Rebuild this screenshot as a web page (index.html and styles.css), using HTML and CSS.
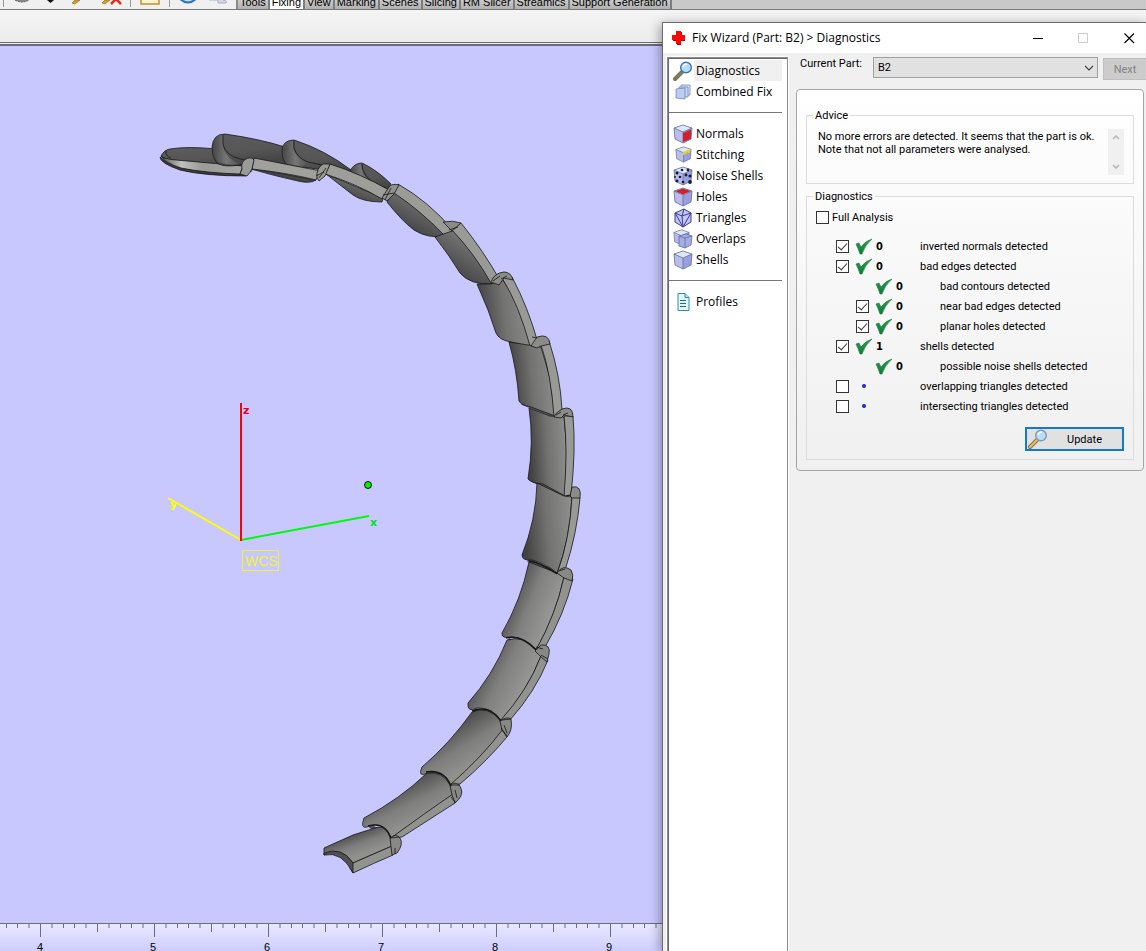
FILE: index.html
```html
<!DOCTYPE html>
<html lang="en">
<head>
<meta charset="utf-8">
<title>Fix Wizard</title>
<link rel="stylesheet" href="styles.css">
</head>
<body>
<div class="app">
  <header class="toolbar">
    <div class="tools">
      <svg class="tools-art" viewBox="0 0 236 9" width="236" height="9" aria-hidden="true">
        <path d="M3.500 0V7M130.500 0V7M169.500 0V7" stroke="#9a9a9a"/>
        <path d="M15 0q7 4 14 0" fill="#888" stroke="#555" stroke-dasharray="2 1"/>
        <path d="M47 0h7l-3.500 3z" fill="#111"/>
        <path d="M72 3l3-3h5l-5 4z" fill="#d79b2c" stroke="#8f6a20" stroke-width=".6"/>
        <path d="M102 3l3-3h5l-5 4z" fill="#d79b2c" stroke="#8f6a20" stroke-width=".6"/>
        <path d="M111 4l5-5M121 4l-5-5" stroke="#d8301c" stroke-width="2.500"/>
        <path d="M141 -2h18v6h-18z" fill="#fff3cf" stroke="#bd922c" stroke-width="1.500"/>
        <path d="M179 -2q9 9 18 0z" fill="#c7e2fa" stroke="#2470cc" stroke-width="2"/>
        <path d="M209 0h9v3h8q2-2-3-3" fill="#d5d8e8" stroke="#aab0c8"/>
      </svg>
    </div>
    <nav class="tabs">
      <button class="tab">Tools</button><button class="tab tab-on">Fixing</button><button class="tab">View</button><button class="tab">Marking</button><button class="tab">Scenes</button><button class="tab">Slicing</button><button class="tab">RM Slicer</button><button class="tab">Streamics</button><button class="tab">Support Generation</button>
    </nav>
  </header>
  <div class="ribbon"></div>
  <main class="viewport">
    <svg class="scene" viewBox="0 46 662 877" role="img" aria-label="Curved segmented part with coordinate axes">
      <defs>
        <linearGradient id="back" x1="0" y1="0" x2=".3" y2="1"><stop offset="0" stop-color="#5c5c5c"/><stop offset=".6" stop-color="#565656"/><stop offset="1" stop-color="#444"/></linearGradient>
        <linearGradient id="lobe" x1="0" y1="0" x2="1" y2="0"><stop offset="0" stop-color="#484848"/><stop offset=".5" stop-color="#777"/><stop offset="1" stop-color="#505050"/></linearGradient>
        <linearGradient id="tip" x1="0" y1="0" x2="1" y2="0"><stop offset="0" stop-color="#555"/><stop offset=".25" stop-color="#c0c0bc"/><stop offset=".5" stop-color="#9b9b99"/><stop offset="1" stop-color="#a4a4a0"/></linearGradient>
        <linearGradient id="up" x1=".2" y1=".9" x2=".65" y2=".25"><stop offset="0" stop-color="#3c3c3c"/><stop offset="1" stop-color="#747474"/></linearGradient>
        <linearGradient id="mid" x1="0" y1=".55" x2="1" y2=".4"><stop offset=".05" stop-color="#424242"/><stop offset=".5" stop-color="#727271"/><stop offset="1" stop-color="#8e8e8c"/></linearGradient>
        <linearGradient id="low" x1=".15" y1=".3" x2=".75" y2=".65"><stop offset="0" stop-color="#4a4a4a"/><stop offset=".5" stop-color="#80807f"/><stop offset="1" stop-color="#969694"/></linearGradient>
        <linearGradient id="end" x1=".3" y1=".25" x2=".62" y2=".72"><stop offset="0" stop-color="#4c4c4c"/><stop offset=".55" stop-color="#7e7e7d"/><stop offset="1" stop-color="#90908d"/></linearGradient>
      </defs>
      <path fill="#777774" d="M240 162L256 158L252 172L241 173Z"/>
      <path d="M511 341L532 347M522 403L553 415M532 480L565 495M528 560L557 573M508 640L536 650M474 711L500 721M428 772L450 785M370 826L391 838" stroke="#555" stroke-width="4" fill="none"/>
      <g stroke="#171717" stroke-width=".8" stroke-linejoin="round">
        <path fill="url(#back)" d="M161 156Q164 150 170 149Q188 146 216 149L246 161L243 169Q200 168 166 160Z"/>
        <path fill="#3c3c3c" d="M160 157L166 162Q203 172 242 171L246 176Q205 176 180 170Q160 163 160 157Z"/>
        <path fill="url(#tip)" d="M161 156Q164 159 176 160L243 166L240 174Q205 173 181 168Q165 163 161 156Z"/>
        <path fill="none" d="M166 151Q165 156 171 158"/>
        <path fill="url(#back)" d="M212 147Q213 134 225 134Q260 139 285 147L288 166L250 163Q219 170 215 160Q212 155 212 147Z"/>
        <path fill="url(#lobe)" stroke="none" d="M213 148Q213 135 223 135V146Q225 158 240 164Q228 166 219 162Q213 157 213 148Z"/>
        <path fill="none" d="M223 135V144Q225 155 240 159L247 160"/>
        <path fill="url(#back)" d="M282 150Q283 140 294 140Q325 150 351 170L354 177L325 170L287 165Q282 160 282 150Z"/>
        <path fill="url(#lobe)" stroke="none" d="M283 151Q284 141 293 141V149Q296 158 308 163L302 167L288 164Q283 159 283 151Z"/>
        <path fill="none" d="M294 141V148Q297 158 308 162L322 165"/>
        <path fill="url(#back)" d="M350 171Q354 163 362 163Q377 170 391 184L385 192L360 179Z"/>
        <path fill="url(#lobe)" stroke="none" d="M351 171Q355 164 361 164Q361 175 371 181L357 176Z"/>
        <path fill="none" d="M362 164Q362 176 376 184L386 188"/>
        <path fill="#454545" d="M251 168L316 180Q310 184 298 181Q275 176 251 169Z"/>
        <path fill="#a0a09c" d="M254 158L321 171L316 180Q288 173 252 169Z"/>
        <path fill="#9a9a97" d="M242 169Q240 161 248 158Q253 157 254 160L252 169Q250 173 247 176L240 174Z"/>
        <path fill="url(#up)" d="M326 174L383 198L382 202Q363 202 353 195Z"/>
        <path fill="#9d9d99" d="M330 164Q361 174 389 190L382 199Q357 184 325 174Z"/>
        <path fill="#999995" d="M317 178Q316 168 323 164L330 164L325 176L319 181Z"/>
        <path fill="url(#up)" d="M387 202Q402 221 414 230Q428 239 446 236L441 224L395 190Z"/>
        <path fill="#9b9b97" d="M398 184Q428 201 453 230L446 237Q420 210 394 193Z"/>
        <path fill="#91918d" d="M382 198L389 187Q392 183 399 185L394 194L387 201Z"/>
        <path fill="url(#up)" d="M435 237Q449 255 460 273Q470 285 492 284L482 258L455 230Z"/>
        <path fill="#999995" d="M461 223Q483 250 501 282Q497 289 491 283Q474 253 452 230Z"/>
        <path fill="#8b8b87" d="M443 222Q453 220 461 223L452 231Z"/>
        <path fill="url(#mid)" d="M477 284L488 310L496 333Q499 340 511 342L531 347L522 307L503 280L491 284Z"/>
        <path fill="#999995" d="M512 277Q528 307 538 343Q534 350 530 346Q519 305 502 278Z"/>
        <path fill="#8b8b87" d="M491 282Q494 273 504 272Q511 272 513 280L504 278L499 285Z"/>
        <path fill="url(#mid)" d="M509 342Q517 370 519 401Q521 405 531 407L555 416L550 378L541 347Z"/>
        <path fill="#999995" d="M549 341Q560 374 562 409L554 417Q551 373 541 345Z"/>
        <path fill="#8b8b87" d="M531 346L537 337Q549 333 550 344L541 346L537 348Z"/>
        <path fill="url(#mid)" d="M529 408Q534 442 528 479Q531 483 543 484L565 496L567 450L564 417L550 416Z"/>
        <path fill="#999995" d="M573 416Q576 450 571 495L564 496Q568 450 564 416Z"/>
        <path fill="#8b8b87" d="M554 417Q555 413 562 409Q573 405 573 417L564 415L561 418Z"/>
        <path fill="url(#mid)" d="M537 483Q536 520 522 555Q522 561 532 560Q545 563 557 573Q570 540 572 497L564 496Z"/>
        <path fill="#999995" d="M580 498Q577 533 566 567L557 574Q570 539 572 496Z"/>
        <path fill="#8b8b87" d="M570 496L572 487Q582 485 580 498L572 498Z"/>
        <path fill="url(#low)" d="M529 562Q521 600 502 633Q501 639 512 637Q524 637 536 650Q555 618 564 577L557 573Z"/>
        <path fill="#92928f" d="M573 579Q564 615 545 647L536 650Q556 614 564 577Z"/>
        <path fill="#888885" d="M557 573Q563 564 571 570Q574 575 572 581L564 578Z"/>
        <path fill="url(#low)" d="M507 640Q493 675 468 703Q467 713 477 708Q493 707 501 721Q527 692 541 656L536 649Q523 635 507 640Z"/>
        <path fill="#92928f" d="M548 660Q535 692 510 720L500 721Q528 690 541 656Z"/>
        <path fill="#888885" d="M535 651L541 645Q551 644 549 654L547 662L541 657Z"/>
        <path fill="url(#end)" d="M472 712Q450 743 422 767Q417 778 428 773Q445 770 451 786Q482 757 504 729L500 720Q488 705 472 712Z"/>
        <path fill="#92928f" d="M507 737Q486 762 460 784L450 785Q482 757 503 729Z"/>
        <path fill="#888885" d="M500 721Q507 716 511 719Q513 730 507 737L502 730Z"/>
        <path fill="url(#end)" d="M427 773Q400 799 364 818Q360 829 367 827Q385 820 391 838L453 795L450 785Q443 771 427 773Z"/>
        <path fill="#92928f" d="M455 803L402 837L391 838Q425 813 453 794Z"/>
        <path fill="#888885" d="M450 785Q457 780 461 788Q464 796 455 803L452 795Z"/>
        <path fill="url(#end)" d="M378 827L353 835L324 848V855Q342 846 353 863L392 846L390 837Q386 826 378 827Z"/>
        <path fill="#92928f" d="M353 863L392 846L393 855Q374 863 353 873L350 868Z"/>
        <path fill="#888885" d="M390 838Q396 833 400 838Q404 844 397 853L392 855Z"/>
        <path fill="#505050" d="M324 853Q342 846 353 863V873Q342 851 324 855Z"/>
      </g>
      <g fill="none" stroke="#151515" stroke-width=".8">
        <path d="M383 195l11-2M385 200l6-12M316 176l8-4M319 178l7-10M449 230l9-3M493 281l7-5M501 279l6-3M532 337l5 1M556 415l5-3M563 415l5-2M566 496l5-1M559 571l6-2M541 655l7 4M536 647l7 2M502 720l9-1M504 725l3 8M501 728l6 8M451 785l9 0M455 790l2 8M451 797l5 6M391 838l8-1M395 848v6"/>
        <path d="M529 561Q540 562 557 574M506 638Q521 634 536 650M472 711Q489 704 501 721M426 772Q444 769 451 786M368 826Q384 821 391 838" stroke-width="1.400"/>
      </g>
      <g fill="none" stroke-width="2">
        <path d="M241 540L369 516" stroke="#00fa0a"/>
        <path d="M241 540L168 498" stroke="#ff0"/>
        <path d="M241 541V403" stroke="#f00"/>
        <path d="M242.500 550.500h36v20h-36z" stroke="#f2f236" stroke-width="1"/>
      </g>
      <circle cx="368" cy="485" r="3.500" fill="#00f000" stroke="#111"/>
      <text class="axis axis-z" x="243" y="414">z</text>
      <text class="axis axis-x" x="370" y="526">x</text>
      <text class="axis axis-y" x="170" y="508">y</text>
      <text class="wcs" x="245" y="566">WCS</text>
    </svg>
  </main>
  <footer class="ruler">
    <svg width="100%" height="28" aria-label="Ruler">
      <defs>
        <pattern id="ticks" x="40" y="0" width="114" height="18" patternUnits="userSpaceOnUse">
          <path d="M.5 0V13M57.500 0V8M12 0V4M23.500 0V4M34.500 0V4M46 0V4M69 0V4M80.500 0V4M91.500 0V4M103 0V4" stroke="#6b6b84"/>
        </pattern>
      </defs>
      <rect width="100%" height="18" fill="url(#ticks)"/>
      <g class="ruler-num"><text x="40" y="27">4</text><text x="153" y="27">5</text><text x="267" y="27">6</text><text x="381" y="27">7</text><text x="495" y="27">8</text><text x="609" y="27">9</text></g>
    </svg>
  </footer>
</div>

<svg class="defs" width="0" height="0" aria-hidden="true">
  <defs>
    <linearGradient id="green" x1="0" y1="0" x2="0" y2="1"><stop offset="0" stop-color="#2c9f4c"/><stop offset="1" stop-color="#0d7c38"/></linearGradient>
    <symbol id="ok" viewBox="0 0 18 18"><path d="M1 7L4 6L6 10Q10 4 17 2Q10 8 7 17H5Q3 11 1 7Z" fill="url(#green)" stroke="#207746" stroke-width=".6"/></symbol>
    <symbol id="cube" viewBox="0 0 20 20"><path d="M1 4L10 1L19 4L10 8Z" fill="#dce8f5"/><path d="M1 4L10 8V19L2 15Z" fill="#b9bdec"/><path d="M10 8L19 4L18 15L10 19Z" fill="#9a9fe0"/><path d="M1 4L10 1L19 4L18 15L10 19L2 15ZM1 4L10 8L19 4M10 8V19" fill="none" stroke="#656d98" stroke-width=".8"/></symbol>
    <symbol id="lens" viewBox="0 0 20 20"><path d="M2 18L9 11" stroke="#7c6a45" stroke-width="4" stroke-linecap="round"/><path d="M2 18L9 11" stroke="var(--grip)" stroke-width="2.400" stroke-linecap="round"/><circle cx="13" cy="6.500" r="5.300" fill="#b9dcf7" stroke="var(--rim)" stroke-width="1.400"/><path d="M10 6Q11 3 14 3" stroke="#fff" stroke-width="1.500" fill="none"/></symbol>
  </defs>
</svg>

<section class="dialog" aria-label="Fix Wizard">
  <header class="titlebar">
    <svg width="14" height="14" viewBox="0 0 14 14" aria-hidden="true"><path d="M5 1h5v4h3v5h-4v4H5v-4H1V5h4z" fill="#b20000"/><path d="M4 0h5v4h4v5H9v4H4V9H0V4h4z" fill="#f80808"/></svg>
    <h1>Fix Wizard (Part: B2) &gt; Diagnostics</h1>
    <div class="winbtns">
      <button aria-label="Minimize"><svg width="11" height="11"><path d="M0 5.500H10" stroke="#000"/></svg></button>
      <button aria-label="Maximize" disabled><svg width="11" height="11"><path d="M.5 .5H9.500V9.500H.5Z" fill="none" stroke="#ccc"/></svg></button>
      <button aria-label="Close"><svg width="11" height="11"><path d="M.5 .5L10 10M10 .5L.5 10" stroke="#000" stroke-width="1.200"/></svg></button>
    </div>
  </header>
  <div class="body">
    <nav class="side">
      <a class="item item-on" href="#diagnostics"><svg class="ico lens-blue"><use href="#lens"/></svg><span>Diagnostics</span></a>
      <a class="item" href="#combined"><svg class="ico" viewBox="0 0 20 20"><g stroke="#7486b8" stroke-width=".8"><path d="M8 3h9v10l-9 1z" fill="#d7e4f6"/><path d="M6 5h9v10H6z" fill="#c8d8f2"/><path d="M3 7l9-1v11l-9-1z" fill="#bbcdf0"/></g></svg><span>Combined Fix</span></a>
      <hr>
      <a class="item" href="#normals"><svg class="ico" viewBox="0 0 20 20"><use href="#cube"/><path d="M10 9L18 5.500V15L10 18Z" fill="#d4202c"/></svg><span>Normals</span></a>
      <a class="item" href="#stitching"><svg class="ico" viewBox="0 0 20 20"><use href="#cube" x="2" y="1" width="17" height="17"/><path d="M10 8L18 5M11 7v3M13 6v3M16 5v3" stroke="#e6d61c" stroke-width="1.700"/></svg><span>Stitching</span></a>
      <a class="item" href="#noise"><svg class="ico" viewBox="0 0 20 20"><use href="#cube"/><g fill="#141a38"><circle cx="4" cy="7" r="1.500"/><circle cx="9" cy="4" r="1.300"/><circle cx="15" cy="4" r="1.400"/><circle cx="7" cy="11" r="1.300"/><circle cx="13" cy="9" r="1.400"/><circle cx="17" cy="10" r="1.500"/><circle cx="4" cy="15" r="1.400"/><circle cx="10" cy="16" r="1.300"/><circle cx="17" cy="16" r="1.900"/><circle cx="2" cy="11" r="1"/></g></svg><span>Noise Shells</span></a>
      <a class="item" href="#holes"><svg class="ico" viewBox="0 0 20 20"><use href="#cube"/><path d="M2 4L10 1.500L18 4L10 7.500Z" fill="#d51c30"/></svg><span>Holes</span></a>
      <a class="item" href="#triangles"><svg class="ico" viewBox="0 0 20 20"><path d="M2 5L11 1L18 5V14L10 19L2 14Z" fill="#c3c5f2"/><path d="M2 5L11 1L18 5V14L10 19L2 14ZM2 5L9 8L18 5M9 8L10 19M2 5L10 19L18 5M11 1L9 8" fill="none" stroke="#383c98" stroke-width="1"/></svg><span>Triangles</span></a>
      <a class="item" href="#overlaps"><svg class="ico" viewBox="0 0 20 20"><use href="#cube" x="0" y="0" width="17" height="17"/><path d="M6 7L13 5L19 7L18 16L12 19L6 17Z" fill="#a4aee6" stroke="#656d98" stroke-width=".8"/><path d="M6 7L12 9L19 7M12 9V19" fill="none" stroke="#656d98" stroke-width=".8"/></svg><span>Overlaps</span></a>
      <a class="item" href="#shells"><svg class="ico" viewBox="0 0 20 20"><use href="#cube"/></svg><span>Shells</span></a>
      <hr>
      <a class="item" href="#profiles"><svg class="ico" viewBox="0 0 20 20"><path d="M5 1.500h7l4 4v13H5z" fill="#e4f6fc" stroke="#2c8fae"/><path d="M12 1.500v4h4" fill="#b6e2f0" stroke="#2c8fae"/><path d="M7 8.500h6M7 11.500h6M7 14.500h6" stroke="#1f6d8c"/></svg><span>Profiles</span></a>
    </nav>
    <div class="content">
      <div class="partrow">
        <label for="part">Current Part:</label>
        <div class="combo"><select id="part"><option>B2</option></select><svg width="10" height="6" aria-hidden="true"><path d="M1 1L5 5L9 1" fill="none" stroke="#444" stroke-width="1.200"/></svg></div>
        <button class="next" disabled>Next</button>
      </div>
      <div class="panel">
        <fieldset>
          <legend>Advice</legend>
          <div class="advice">
            <p>No more errors are detected. It seems that the part is ok.<br>Note that not all parameters were analysed.</p>
            <div class="scroll"><svg width="8" height="5"><path d="M1 4L4 1L7 4" fill="none" stroke="#b4b4b4" stroke-width="1.500"/></svg><svg width="8" height="5"><path d="M1 1L4 4L7 1" fill="none" stroke="#b4b4b4" stroke-width="1.500"/></svg></div>
          </div>
        </fieldset>
        <fieldset class="second">
          <legend>Diagnostics</legend>
          <div class="diag">
            <label class="full"><input type="checkbox"> Full Analysis</label>
            <div class="rows">
              <label class="row"><input type="checkbox" checked><svg class="ok"><use href="#ok"/></svg><b>0</b><span>inverted normals detected</span></label>
              <label class="row"><input type="checkbox" checked><svg class="ok"><use href="#ok"/></svg><b>0</b><span>bad edges detected</span></label>
              <div class="row row-sub"><i></i><svg class="ok"><use href="#ok"/></svg><b>0</b><span>bad contours detected</span></div>
              <label class="row row-sub"><input type="checkbox" checked><svg class="ok"><use href="#ok"/></svg><b>0</b><span>near bad edges detected</span></label>
              <label class="row row-sub"><input type="checkbox" checked><svg class="ok"><use href="#ok"/></svg><b>0</b><span>planar holes detected</span></label>
              <label class="row"><input type="checkbox" checked><svg class="ok"><use href="#ok"/></svg><b>1</b><span>shells detected</span></label>
              <div class="row row-sub"><i></i><svg class="ok"><use href="#ok"/></svg><b>0</b><span>possible noise shells detected</span></div>
              <label class="row"><input type="checkbox"><i class="dot"></i><b></b><span>overlapping triangles detected</span></label>
              <label class="row"><input type="checkbox"><i class="dot"></i><b></b><span>intersecting triangles detected</span></label>
            </div>
            <button class="update"><svg class="lens-gold"><use href="#lens"/></svg><span>Update</span></button>
          </div>
        </fieldset>
      </div>
    </div>
  </div>
</section>
</body>
</html>
```
FILE: styles.css
```css
* { box-sizing: border-box; }
body { margin: 0; height: 100vh; overflow: hidden; position: relative; background: #f0f0f0; font: 11px/13px Roboto, "Noto Sans", sans-serif; color: #000; }
button { font: inherit; margin: 0; padding: 0; border: 0; background: none; color: inherit; }
svg { display: block; flex: none; }
.defs { position: absolute; }

.app { height: 100%; display: flex; flex-direction: column; }
.toolbar { display: flex; height: 10px; flex: none; overflow: hidden; border-bottom: 1px solid #777; background: linear-gradient(90deg, #f0f0f0 230px, #c9c9c9 680px); }
.tools { width: 238px; height: 9px; border-right: 2px solid #8a8a8a; }
.tabs { display: flex; align-items: flex-end; height: 9px; }
.tab { height: 13px; padding: 0 2px; border-right: 2px solid #7c7c7c; background: linear-gradient(#d8d8d8, #b0b0b0); font: 11px/13px "Liberation Sans", Arial, sans-serif; white-space: nowrap; }
.tab-on { background: #fff; }
.ribbon { height: 36px; flex: none; background: linear-gradient(#f4f4f4, #ececec 32px, #6b6b70 32px, #6b6b70 33px, #eee 33px, #eee 34px, #6a6a78 34px); }
.viewport { flex: 1; min-height: 0; background: #c8c8ff; overflow: hidden; }
.scene { width: 662px; height: auto; }
.axis { font: bold 11px "DejaVu Sans", sans-serif; }
.axis-z { fill: #e40020; }
.axis-x { fill: #00e020; }
.axis-y { fill: #ff0; }
.wcs { font: 14px "Liberation Sans", Arial, sans-serif; fill: #f2f236; }
.ruler { height: 28px; flex: none; border-top: 1px solid #6b6b84; background: linear-gradient(#e8e8ff, #ceceff); }
.ruler-num { font: 11px "Liberation Sans", Arial, sans-serif; text-anchor: middle; }

.dialog { position: absolute; top: 22px; right: 0; bottom: 0; width: 484px; display: flex; flex-direction: column; background: #f0f0f0; border: solid #6a6a70; border-width: 1px 0 0 1px; box-shadow: -2px 2px 10px rgba(0, 0, 0, .35); }
.titlebar { height: 30px; flex: none; display: flex; align-items: center; gap: 6px; padding-left: 9px; background: #fff; }
.titlebar h1 { flex: 1; margin: 0; font: 12px/16px "Open Sans", "Noto Sans", sans-serif; }
.winbtns { display: flex; }
.winbtns button { width: 45px; height: 30px; display: grid; place-items: center; }
.winbtns button:last-child { width: 40px; padding-right: 11px; justify-items: end; }
.body { flex: 1; min-height: 0; display: flex; padding-top: 4px; }
.side { width: 121px; flex: none; margin-left: 4px; padding: 2px 5px 0 1px; background: #fff; border: 1px solid #8c8c8c; border-bottom: 0; outline: 1px solid #fff; box-shadow: inset 1px 1px #69696f; font: 12px/16px "Open Sans", "Noto Sans", sans-serif; }
.item { height: 21px; display: flex; align-items: center; padding-left: 4px; gap: 1px; color: #000; text-decoration: none; white-space: nowrap; }
.item span { flex: 1; padding-left: 2px; line-height: 21px; }
.item-on span { background: #f0f0f0; }
.ico { width: 20px; height: 20px; }
.lens-blue { --grip: #77836a; --rim: #3678b8; }
.lens-gold { --grip: #f0b860; --rim: #7d98b8; width: 20px; height: 20px; }
.side hr { margin: 10px 0; height: 1px; border: 0; background: #777; }

.content { flex: 1; min-width: 0; padding-left: 8px; }
.partrow { display: flex; align-items: flex-start; padding-left: 4px; height: 32px; overflow: hidden; }
.partrow label { width: 73px; flex: none; }
.combo { flex: 1; display: grid; align-items: center; height: 21px; }
.combo > * { grid-area: 1 / 1; }
.combo svg { justify-self: end; margin-right: 4px; pointer-events: none; }
.combo select { appearance: none; width: 100%; height: 21px; padding: 0 4px; border: 1px solid #a0a0a0; border-radius: 0; background: #e1e1e1; font: inherit; color: #000; }
.next { width: 43px; height: 22px; margin: 1px 0 0 5px; background: #ccc; border: 1px solid #bfbfbf; border-right: 0; color: #838383; }
.panel { margin-right: 2px; padding: 19px 9px 10px; border: 1px solid #a5a5a5; border-radius: 4px; background: linear-gradient(#fff, #f0f0f0); }
fieldset { margin: 0; padding: 0; min-width: 0; border: 1px solid #dcdcdc; }
.second { margin-top: 6px; }
legend { margin-left: 6px; padding: 0 2px; line-height: 13px; }
.advice { height: 61px; display: flex; justify-content: space-between; padding: 0 9px 0 11px; }
.advice p { margin: 8px 0 0; white-space: nowrap; }
.scroll { width: 16px; height: 46px; margin-top: 7px; flex: none; display: flex; flex-direction: column; align-items: center; justify-content: space-between; padding: 6px 0; background: #f0f0f0; }
.diag { padding: 7px 9px 8px; }
input[type="checkbox"] { appearance: none; position: relative; flex: none; width: 13px; height: 13px; margin: 0; border: 1px solid #333; background: #fff; }
input:checked::after { content: ""; position: absolute; left: 3px; top: 0; width: 4px; height: 8px; border: solid #333; border-width: 0 1px 1px 0; transform: rotate(42deg); }
.full { display: flex; align-items: center; gap: 3px; height: 14px; }
.rows { margin: 12px 0 11px 20px; }
.row { height: 20px; display: grid; grid-template-columns: 13px 6px 18px 3px 44px 1fr; align-items: center; white-space: nowrap; }
.row-sub { margin-left: 20px; }
.row b { font-family: "DejaVu Sans Condensed", "DejaVu Sans", sans-serif; }
.row > :nth-child(2) { grid-column: 3; }
.row > :nth-child(3) { grid-column: 5; }
.row > :nth-child(4) { grid-column: 6; }
.ok { width: 18px; height: 18px; }
.dot { width: 4px; height: 4px; border-radius: 50%; background: #2020e0; justify-self: center; }
.update { display: flex; align-items: center; width: 99px; height: 24px; margin-left: auto; padding: 0 1px; border: 2px solid #1878c8; background: #e1e1e1; }
.update span { flex: 1; text-align: center; }
```
